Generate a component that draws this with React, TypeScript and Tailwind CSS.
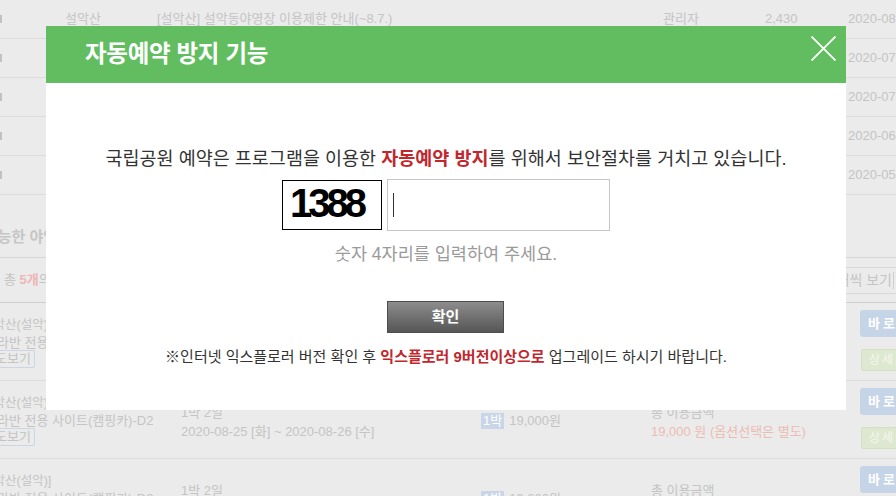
const boardRows = [
  { place: '설악산', title: '[설악산] 설악동야영장 이용제한 안내(~8.7.)', writer: '관리자', views: '2,430', date: '2020-08-04' },
  { place: '설악산', title: '[설악산] 설악동야영장 시설 점검 안내', writer: '관리자', views: '1,982', date: '2020-07-21' },
  { place: '설악산', title: '[설악산] 우천시 야영장 이용 안내', writer: '관리자', views: '1,544', date: '2020-07-02' },
  { place: '설악산', title: '[설악산] 카라반 예약 변경 안내', writer: '관리자', views: '2,108', date: '2020-06-15' },
  { place: '설악산', title: '[설악산] 야영장 운영 재개 안내', writer: '관리자', views: '3,301', date: '2020-05-27' },
];

const siteRows = [
  { name: '설악산(설악)', site: '카라반 전용 사이트(캠핑카)-D1', from: '2020-08-24 [월]', to: '2020-08-25 [화]' },
  { name: '설악산(설악)', site: '카라반 전용 사이트(캠핑카)-D2', from: '2020-08-25 [화]', to: '2020-08-26 [수]' },
  { name: '설악산(설악)]', site: '카라반 전용 사이트(캠핑카)-D3', from: '2020-08-26 [수]', to: '2020-08-27 [목]' },
];

export default function App() {
  return (
    <div className="relative w-[896px] h-[496px] overflow-hidden bg-[#ebebeb] text-[#c4c4c4] font-['Liberation_Sans','Noto_Sans_CJK_KR',sans-serif]">
      {/* Dimmed page behind the popup */}
      <div className="flex flex-col">
        {boardRows.map((r, i) => (
          <div key={i} className="flex items-center h-[39px] border-b border-[#dcdcdc] text-[13px] whitespace-nowrap">
            <div className="w-[65px] shrink-0 h-full flex items-center">
              <div className="w-[2px] h-[8px] bg-[#c2c2c2]" />
            </div>
            <div className="w-[92px] shrink-0">{r.place}</div>
            <div className="w-[506px] shrink-0">{r.title}</div>
            <div className="w-[102px] shrink-0">{r.writer}</div>
            <div className="w-[83px] shrink-0">{r.views}</div>
            <div className="shrink-0">{r.date}</div>
          </div>
        ))}

        <div className="mt-[32px] h-[31px] border-b border-[#d6d6d6] text-[15px] leading-[20px] font-bold text-[#c6c6c6] ml-[-16px] whitespace-nowrap">
          가능한 야영장 목록
        </div>

        <div className="flex items-center justify-between h-[44px] text-[13px] whitespace-nowrap">
          <div className="pl-[4px]">
            총 <span className="text-[#edb6b6] font-bold">5개</span>의 야영장이 검색되었습니다.
          </div>
          <div className="flex items-center justify-end shrink-0 h-[27px] w-[120px] mr-[-12px] pr-[14px] border-y border-l border-[#d8d8d8] text-[14px]">
            <span>10개씩 보기</span>
            <span className="ml-[1px] h-[17px] border-l border-[#cfcfcf]" />
          </div>
        </div>

        <div className="border-t border-[#cdcdcd]">
          {siteRows.map((r, i) => (
            <div key={i} className="flex h-[78px] border-b border-[#dcdcdc] whitespace-nowrap">
              <div className="w-[181px] shrink-0 pt-[13px] text-[13px] leading-[18px] overflow-hidden">
                <div className="ml-[-18px] text-[12.5px]">{r.name}</div>
                <div className="ml-[-15px]">{r.site}</div>
                <div className="mt-[-2px] ml-[-30px] w-[65px] h-[18px] border border-[#c9d6e6] rounded-[2px] text-[13px] leading-[16px] text-right pr-[3px]">
                  배치도보기
                </div>
              </div>
              <div className="w-[300px] shrink-0 pt-[22px] text-[13px] leading-[19px]">
                <div>1박 2일</div>
                <div>{r.from} ~ {r.to}</div>
              </div>
              <div className="w-[170px] shrink-0 pt-[32px]">
                <div className="flex items-center gap-[5px] h-[16px] text-[13px]">
                  <span className="bg-[#c8d6e8] text-white px-[2px] leading-[16px]">1박</span>
                  <span>19,000원</span>
                </div>
              </div>
              <div className="w-[209px] shrink-0 pt-[22px] text-[13px] leading-[19px]">
                <div>총 이용금액</div>
                <div className="text-[#ebbcb3]">19,000 원 (옵션선택은 별도)</div>
              </div>
              <div className="shrink-0 pt-[7px] flex flex-col items-start">
                <div className="h-[27px] w-[60px] rounded-[3px] bg-[#c6d4e8] text-white text-[13px] font-bold tracking-[3px] flex items-center pl-[8px]">
                  바로예약
                </div>
                <div className="mt-[12px] ml-[1px] h-[22px] w-[60px] rounded-[2px] bg-[#dee8d0] border border-[#d4e0c4] text-[#f4f7ef] text-[12px] tracking-[2px] flex items-center pl-[7px]">
                  상세보기
                </div>
              </div>
            </div>
          ))}
        </div>
      </div>

      {/* Popup */}
      <div className="absolute left-[46px] top-[26px] w-[800px] bg-white">
        <div className="relative h-[57px] bg-[#62bd60] flex items-center pl-[39px]">
          <h2 className="text-white text-[23.5px] font-bold tracking-[-0.3px]">자동예약 방지 기능</h2>
          <button className="absolute top-[10px] right-[10px] w-[25px] h-[25px]" aria-label="닫기">
            <svg viewBox="0 0 25 25" className="w-[25px] h-[25px]">
              <path d="M0.5 0.5 L24.5 24.5 M24.5 0.5 L0.5 24.5" stroke="#ffffff" strokeWidth="1.8" fill="none" />
            </svg>
          </button>
        </div>

        <div className="flex flex-col items-center pt-[64px] pb-[43px]">
          <p className="text-[18.5px] leading-[24px] text-[#333333] whitespace-nowrap">
            국립공원 예약은 프로그램을 이용한 <span className="text-[#c1272d] font-bold">자동예약 방지</span>를 위해서 보안절차를 거치고 있습니다.
          </p>

          <div className="mt-[8px] flex items-center gap-[5px] h-[52px]">
            <div className="w-[100px] h-[50px] border border-black flex items-center pl-[7px] pb-[4px]">
              <span className="font-['Liberation_Sans',sans-serif] text-[40px] leading-none font-bold tracking-[-4px] text-black">1388</span>
            </div>
            <div className="w-[223px] h-[52px] border border-[#c6c6c6] flex items-center pl-[5px]">
              <span className="w-[1px] h-[24px] bg-[#333333]" />
            </div>
          </div>

          <p className="mt-[12px] text-[17.5px] leading-[22px] text-[#9a9a9a]">숫자 4자리를 입력하여 주세요.</p>

          <button className="mt-[36px] w-[117px] h-[32px] border border-[#4d4d4d] bg-gradient-to-b from-[#8d8d8d] to-[#565656] text-white text-[15px] font-bold ml-[-1px]">
            확인
          </button>

          <p className="mt-[14px] text-[15px] leading-[20px] text-[#333333] whitespace-nowrap">
            ※인터넷 익스플로러 버전 확인 후 <span className="text-[#c1272d] font-bold">익스플로러 9버전이상으로</span> 업그레이드 하시기 바랍니다.
          </p>
        </div>
      </div>
    </div>
  );
}
